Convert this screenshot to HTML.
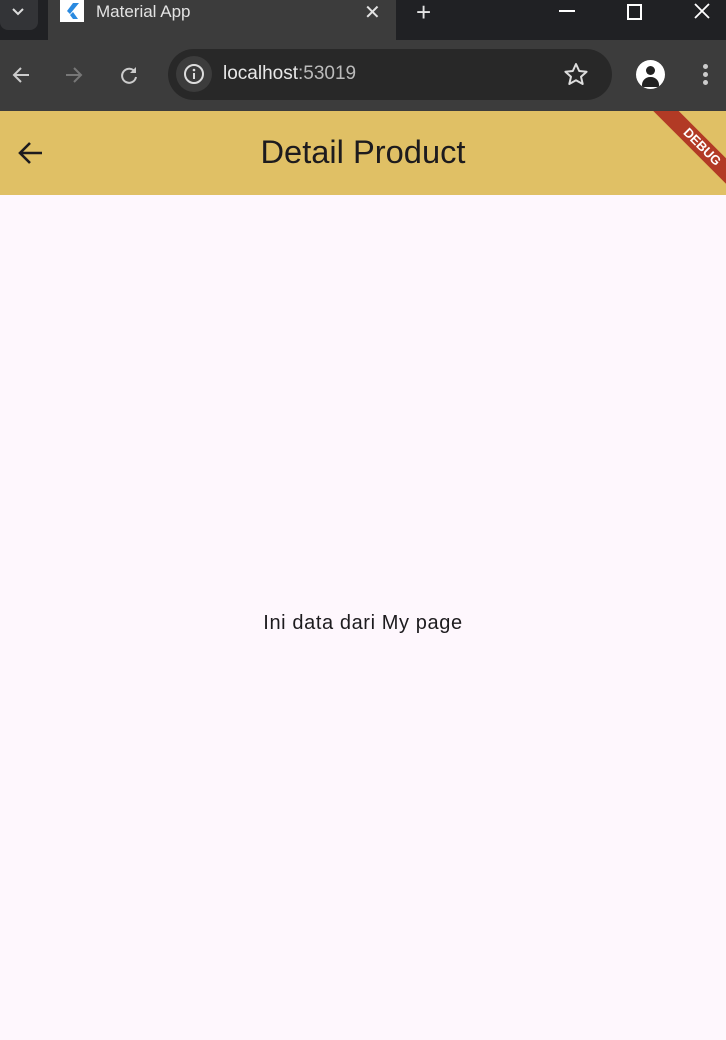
<!DOCTYPE html><html><head><style>
body{margin:0;width:726px;height:1040px;background:#fef7fd;font-family:"Liberation Sans",sans-serif;position:relative;overflow:hidden}
div{position:absolute}
</style></head><body>
<div style="left:0;top:0;width:726px;height:40px;background:#202124"></div>
<div style="left:0;top:0;width:38px;height:30px;background:#333437;border-radius:0 0 8px 8px"></div>
<svg style="position:absolute;left:10px;top:6px" width="16" height="12"><path d="M3 3l5 5 5-5" stroke="#ddd" stroke-width="2" fill="none"/></svg>
<div style="left:48px;top:0;width:348px;height:40px;background:#3c3c3c"></div>
<div style="left:60px;top:0;width:24px;height:22px;background:#fff"></div>
<svg style="position:absolute;left:64px;top:2px" width="16" height="18"><path d="M9 1L3 9l3 3 9-11z M9 10l-3 3 3 4h5l-5-7z" fill="#2a8ae0"/></svg>
<div style="left:96px;top:2px;color:#e3e3e3;font-size:17px">Material App</div>
<div style="left:364px;top:0px;color:#e3e3e3;font-size:20px">✕</div>
<div style="left:416px;top:-3px;color:#e3e3e3;font-size:26px">+</div>
<div style="left:559px;top:10px;width:16px;height:2px;background:#fff"></div>
<div style="left:627px;top:4px;width:11px;height:12px;border:2px solid #fff"></div>
<svg style="position:absolute;left:694px;top:3px" width="16" height="16"><path d="M1 1l14 14M15 1L1 15" stroke="#fff" stroke-width="1.8"/></svg>
<div style="left:0;top:40px;width:726px;height:71px;background:#3c3c3c"></div>
<svg style="position:absolute;left:10px;top:64px" width="22" height="22"><path d="M19 11H4M11 4l-7 7 7 7" stroke="#ccc" stroke-width="2" fill="none"/></svg>
<svg style="position:absolute;left:63px;top:64px" width="22" height="22"><path d="M3 11h15M11 4l7 7-7 7" stroke="#777" stroke-width="2" fill="none"/></svg>
<svg style="position:absolute;left:118px;top:64px" width="22" height="22"><path d="M17 8A7 7 0 1 0 18 13" stroke="#ccc" stroke-width="2" fill="none"/><path d="M18 3v6h-6z" fill="#ccc"/></svg>
<div style="left:168px;top:49px;width:444px;height:51px;background:#282828;border-radius:26px"></div>
<div style="left:176px;top:56px;width:36px;height:36px;background:#3c3c3c;border-radius:18px"></div>
<svg style="position:absolute;left:183px;top:63px" width="22" height="22"><circle cx="11" cy="11" r="9" stroke="#ddd" stroke-width="2" fill="none"/><path d="M11 10v6" stroke="#ddd" stroke-width="2"/><circle cx="11" cy="7" r="1.3" fill="#ddd"/></svg>
<div style="left:223px;top:63px;font-size:19px;color:#e8e8e8">localhost<span style="color:#bbb">:53019</span></div>
<svg style="position:absolute;left:563px;top:62px" width="26" height="26"><path d="M13 2l3.2 7 7.4.7-5.6 5 1.7 7.3L13 18.3 6.3 22l1.7-7.3-5.6-5 7.4-.7z" stroke="#ddd" stroke-width="2" fill="none" stroke-linejoin="round"/></svg>
<div style="left:636px;top:60px;width:29px;height:29px;background:#fff;border-radius:50%;overflow:hidden"><div style="left:10px;top:6px;width:9px;height:9px;border-radius:50%;background:#222"></div><div style="left:6px;top:17px;width:17px;height:10px;border-radius:8px 8px 0 0;background:#222"></div></div>
<div style="left:703px;top:64px;width:5px;height:5px;border-radius:50%;background:#ccc;box-shadow:0 8px #ccc,0 16px #ccc"></div>
<div style="left:0;top:111px;width:726px;height:84px;background:#e0c065;overflow:hidden">
<svg style="position:absolute;left:16px;top:29px" width="28" height="26"><path d="M26 13H4M14 3L4 13l10 10" stroke="#1d1b1e" stroke-width="2.6" fill="none"/></svg>
<div style="left:0;top:23px;width:726px;text-align:center;font-size:32px;color:#1d1b1e;transform:scaleX(1.02)">Detail Product</div>
<div style="left:642px;top:27px;width:120px;height:18px;background:#b23a25;transform:rotate(45deg);color:#fff;font-size:13px;font-weight:bold;text-align:center;line-height:18px">DEBUG</div>
</div>
<div style="left:0;top:612px;width:726px;text-align:center;font-size:20px;letter-spacing:0.6px;color:#1d1b1e">Ini data dari My page</div>
</body></html>
